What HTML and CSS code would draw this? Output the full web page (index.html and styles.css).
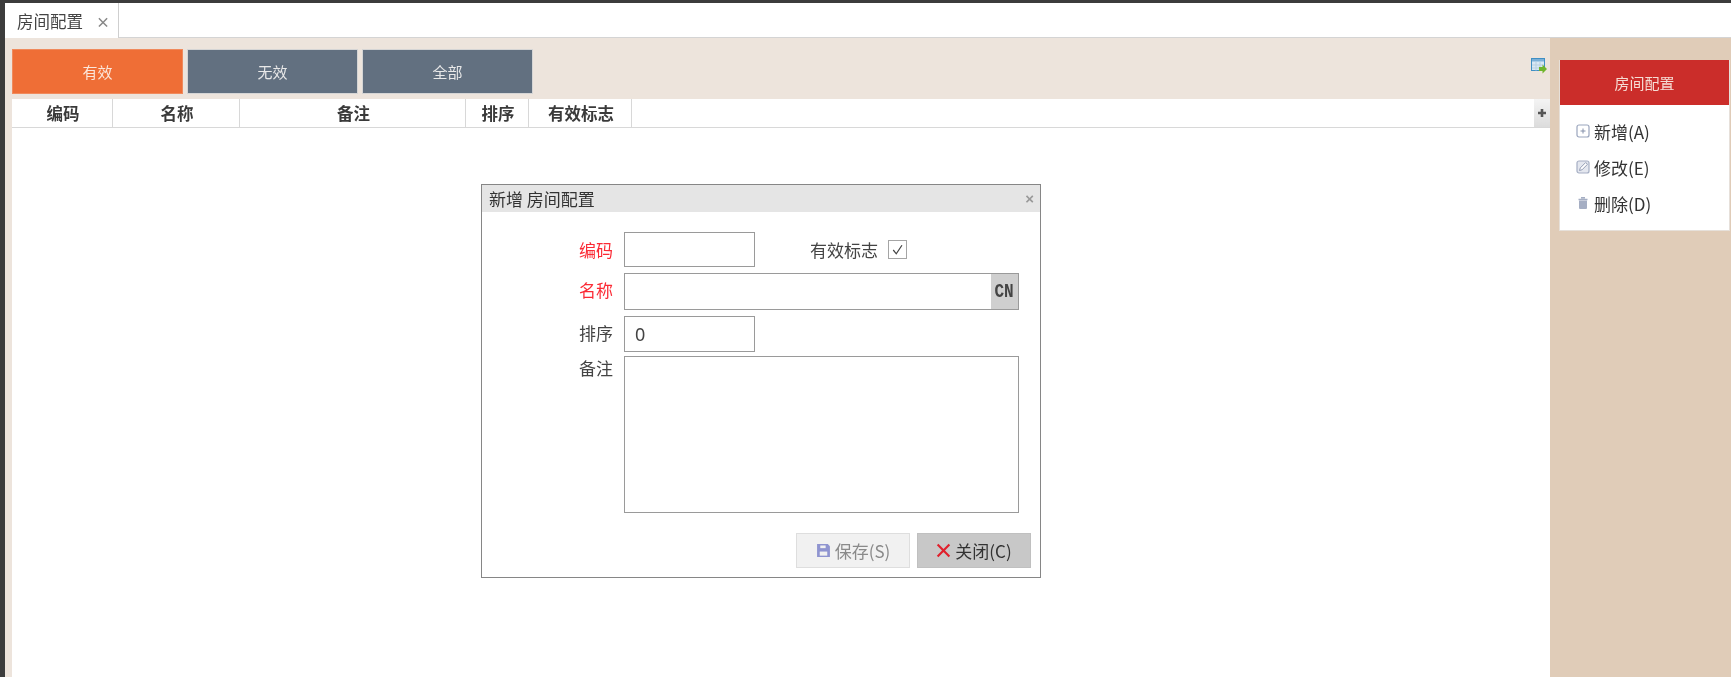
FILE: index.html
```html
<!DOCTYPE html>
<html lang="zh">
<head>
<meta charset="utf-8">
<title>房间配置</title>
<link rel="stylesheet" href="styles.css">
</head>
<body>
<div class="app">
  <div class="tabbar">
    <div class="tab"><span>房间配置</span><span class="tab-x">×</span></div>
  </div>
  <div class="main">
    <div class="content">
      <div class="filters">
        <button class="filter on">有效</button>
        <button class="filter">无效</button>
        <button class="filter">全部</button>
        <svg class="export" viewBox="0 0 16 16" width="16" height="16">
          <rect x="0.5" y="0.5" width="13" height="12" fill="#d8e8f4" stroke="#3f8fc4"/>
          <rect x="1" y="1" width="12" height="2.500" fill="#7ab0d8"/>
          <path d="M5 3.500v9M9 3.500v9M1 7h12M1 10h12" stroke="#b8cfe0" stroke-width="1"/>
          <path d="M8 9h3.500V6.500L16 11l-4.500 4.500V13H8z" fill="#6fb52c"/>
        </svg>
      </div>
      <div class="table">
        <div class="thead">
          <div class="th c1">编码</div>
          <div class="th c2">名称</div>
          <div class="th c3">备注</div>
          <div class="th c4">排序</div>
          <div class="th c5">有效标志</div>
          <div class="th-fill"></div>
          <div class="th-end">
            <svg viewBox="0 0 8 8" width="8" height="8"><path d="M4 0v8M0 4h8" stroke="#555" stroke-width="2.600"/></svg>
          </div>
        </div>
      </div>
    </div>
    <aside class="side">
      <div class="menu">
        <div class="menu-head">房间配置</div>
        <div class="menu-body">
          <div class="menu-item">
            <svg viewBox="0 0 14 14" width="14" height="14"><rect x="1" y="1" width="12" height="12" rx="2" fill="none" stroke="#9aa5bd" stroke-width="1.200"/><path d="M7 4.500v5M4.500 7h5" stroke="#8490aa"/></svg>
            <span>新增(A)</span>
          </div>
          <div class="menu-item">
            <svg viewBox="0 0 14 14" width="14" height="14"><rect x="1" y="1" width="12" height="12" rx="2" fill="#e4e7ef" stroke="#a5aec3" stroke-width="1.200"/><path d="M3.500 10.500l.8-2.600 5.400-5.400 1.800 1.800-5.400 5.400z" fill="#fff" stroke="#949db5" stroke-width="1"/></svg>
            <span>修改(E)</span>
          </div>
          <div class="menu-item">
            <svg viewBox="0 0 14 14" width="14" height="14"><path d="M5 1.800h4M2.500 3.500h9" stroke="#a5aec3" stroke-width="1.400"/><path d="M3 4.500h8v7.500a1 1 0 0 1-1 1H4a1 1 0 0 1-1-1z" fill="#a5aec3"/></svg>
            <span>删除(D)</span>
          </div>
        </div>
      </div>
    </aside>
  </div>
  <div class="dialog">
    <div class="dialog-title"><span>新增 房间配置</span><span class="dialog-x">×</span></div>
    <div class="form">
      <div class="row row-a">
        <label class="lbl req">编码</label>
        <div class="inp short"></div>
        <span class="check-lbl">有效标志</span>
        <span class="check"><svg viewBox="0 0 18 18" width="18" height="18"><path d="M4.500 9l3.200 4 6-9" fill="none" stroke="#444" stroke-width="1.300"/></svg></span>
      </div>
      <div class="row row-b">
        <label class="lbl req">名称</label>
        <div class="inp long"><span class="cn"><span class="cn-text">CN</span></span></div>
      </div>
      <div class="row row-c">
        <label class="lbl">排序</label>
        <div class="inp short val">0</div>
      </div>
      <div class="row row-d">
        <label class="lbl lbl-top">备注</label>
        <div class="inp area"></div>
      </div>
    </div>
    <div class="actions">
      <button class="act save">
        <svg viewBox="0 0 14 14" width="15" height="15"><path d="M1 1h10l2 2v10H1z" fill="#8f94d0"/><rect x="4" y="2.300" width="5" height="2.500" fill="#f1f1f1"/><rect x="3.500" y="8" width="7" height="3.800" fill="#f1f1f1"/></svg>
        保存(S)
      </button>
      <button class="act close">
        <svg viewBox="0 0 14 14" width="15" height="15"><path d="M1.500 1.500l11 11M12.500 1.500l-11 11" stroke="#e0202c" stroke-width="2"/></svg>
        关闭(C)
      </button>
    </div>
  </div>
</div>
</body>
</html>
```
FILE: styles.css
```css
* { box-sizing: border-box; }
html, body { margin: 0; height: 100%; overflow: hidden; }
body {
  background: #3c3c3c;
  font-family: "Noto Sans CJK SC", "Liberation Sans", sans-serif;
  color: #333;
}
.app {
  position: relative;
  height: 677px;
  padding: 3px 0 0 5px;
  display: flex;
  flex-direction: column;
  filter: blur(0.4px);
}
.tabbar {
  height: 35px;
  background: #fff;
  border-bottom: 1px solid #d4d4d4;
  display: flex;
}
.tab {
  width: 114px;
  height: 35px;
  padding-left: 12px;
  background: #fff;
  border-right: 1px solid #cfcfcf;
  display: flex;
  align-items: center;
  gap: 13px;
  font-size: 16.500px;
  color: #444;
}
.tab-x { font-size: 14px; font-weight: 700; color: #888; }
.main { flex: 1; display: flex; min-height: 0; }
.content {
  width: 1545px;
  background: #ede4dc;
  padding: 11px 0 0 7px;
  display: flex;
  flex-direction: column;
}
.filters { position: relative; display: flex; gap: 4px; height: 45px; margin-bottom: 5px; }
.filter {
  width: 171px;
  height: 45px;
  border: 1px solid #d5d5d5;
  background: #627080;
  color: #e8e8e8;
  font: 15px "Noto Sans CJK SC", sans-serif;
}
.filter.on { background: #ef6e36; border-color: #f08a5c; color: #fbe6da; }
.export { position: absolute; top: 9px; right: 3px; }
.table { flex: 1; background: #fff; }
.thead { display: flex; height: 29px; border-bottom: 1px solid #d8d8d8; }
.th {
  border-right: 1px solid #d8d8d8;
  padding-left: 2px;
  text-align: center;
  font-size: 16.500px;
  line-height: 28px;
  font-weight: 700;
  color: #3a3a3a;
}
.c1 { width: 101px; }
.c2 { width: 127px; }
.c3 { width: 226px; }
.c4 { width: 63px; }
.c5 { width: 103px; }
.th-fill { flex: 1; }
.th-end {
  width: 16px;
  background: linear-gradient(#f4f4f4, #dcdcdc);
  display: flex;
  align-items: center;
  justify-content: center;
}
.side { flex: 1; background: #e0ccb8; padding: 22px 1px 0 9px; }
.menu { background: #fff; border: 1px solid #e6e0da; border-top: 0; }
.menu-head {
  height: 45px;
  background: #cb2d2a;
  color: #f6dcd4;
  font-size: 15px;
  text-align: center;
  line-height: 45px;
}
.menu-body { padding: 8px 0 9px 16px; }
.menu-item {
  height: 36px;
  display: flex;
  align-items: center;
  gap: 4px;
  font-size: 17px;
  color: #333;
}
.dialog {
  position: absolute;
  left: 481px;
  top: 184px;
  width: 560px;
  height: 394px;
  background: #fff;
  border: 1px solid #868686;
}
.dialog-title {
  height: 27px;
  background: #e5e5e5;
  padding: 0 6px 0 7px;
  display: flex;
  justify-content: space-between;
  align-items: center;
  font-size: 17px;
  color: #333;
}
.dialog-x { font: 700 15px "Liberation Sans", sans-serif; color: #999; }
.form { padding: 20px 21px 0 0; }
.row { display: flex; }
.row-a { height: 35px; margin-bottom: 6px; align-items: center; }
.row-b { height: 37px; margin-bottom: 6px; }
.row-c { height: 36px; margin-bottom: 4px; }
.row-d { height: 157px; }
.lbl {
  width: 142px;
  padding-right: 11px;
  text-align: right;
  font-size: 17px;
  line-height: 34px;
  color: #444;
}
.lbl-top { line-height: 24px; }
.req { color: #fb2a35; }
.inp { border: 1px solid #9a9a9a; background: #fff; height: 100%; }
.short { width: 131px; }
.long { width: 395px; display: flex; justify-content: flex-end; }
.area { width: 395px; }
.val { padding-left: 10px; font: 18px/34px "Noto Sans", sans-serif; color: #444; }
.cn {
  width: 27px;
  background: #cfcfcf;
  text-align: center;
  color: #444;
}
.cn-text {
  display: inline-block;
  font: 700 20px/35px "Liberation Mono", monospace;
  transform: scaleX(0.8);
}
.check-lbl { margin-left: 55px; font-size: 17px; color: #444; }
.check {
  width: 19px;
  height: 19px;
  margin-left: 10px;
  border: 1px solid #a5a5a5;
  display: flex;
}
.actions {
  display: flex;
  justify-content: flex-end;
  gap: 7px;
  padding: 20px 9px 0 0;
}
.act {
  width: 114px;
  height: 35px;
  display: flex;
  align-items: center;
  justify-content: center;
  gap: 4px;
  font: 17px "Noto Sans CJK SC", sans-serif;
  padding: 0;
}
.save { background: #f1f1f1; border: 1px solid #dedede; color: #8a8a8a; }
.close { background: #c8c8c8; border: 1px solid #c0c0c0; color: #333; }
```
